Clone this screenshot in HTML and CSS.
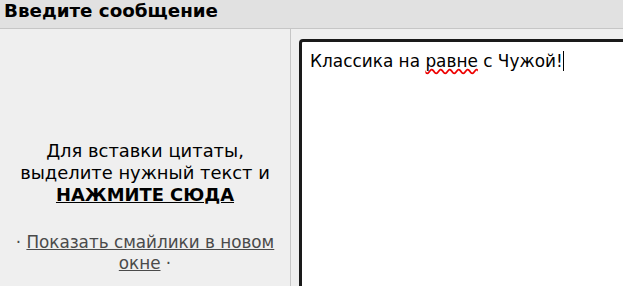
FILE: index.html
```html
<!DOCTYPE html>
<html lang="ru">
<head>
<meta charset="utf-8">
<link rel="stylesheet" href="styles.css">
</head>
<body>
<div class="header">Введите сообщение</div>
<div class="row">
  <div class="side">
    <div class="quote">Для вставки цитаты,<br>выделите нужный текст и<br><a class="strong-link" href="#">НАЖМИТЕ СЮДА</a></div>
    <div class="smiles">· <a href="#">Показать смайлики в новом окне</a> ·</div>
  </div>
  <div class="main">
    <div class="editor">Классика на <span class="spell">равне</span> с Чужой!<span class="caret"></span></div>
  </div>
</div>
</body>
</html>
```
FILE: styles.css
```css
html, body { margin: 0; padding: 0; overflow: hidden; }
body {
  width: 623px; height: 286px;
  background: #efefef;
  font-family: "DejaVu Sans", Verdana, sans-serif;
  color: #000;
}
.header {
  height: 29px;
  box-sizing: border-box;
  background: #e1e1e1;
  border-bottom: 1px solid #c6c6c6;
  font-weight: bold;
  font-size: 18.3px;
  line-height: 21px;
  padding-left: 4px;
}
.row { display: flex; height: 257px; }
.side {
  width: 291px;
  flex: none;
  box-sizing: border-box;
  border-right: 1px solid #c6c6c6;
  text-align: center;
  padding-top: 111px;
}
.quote { font-size: 17.9px; line-height: 22px; }
.strong-link { color: #000; font-weight: bold; text-decoration: underline; }
.smiles { margin-top: 26px; font-size: 16.8px; line-height: 21px; color: #4a4a4a; padding: 0 8px; }
.smiles a { color: #4a4a4a; text-decoration: underline; }
.main { flex: 1; padding: 10px 0 0 8px; overflow: hidden; }
.editor {
  width: 420px; height: 300px;
  background: #fff;
  border: 3px solid #1a1a1a;
  border-radius: 4px;
  box-sizing: border-box;
  padding: 8px 8px;
  font-size: 16.9px;
  line-height: 22px;
  color: #000;
}
.spell { text-decoration: underline wavy #e00; text-decoration-skip-ink: none; }
.caret { display: inline-block; width: 1px; height: 20px; background: #000; vertical-align: -4px; }
```
